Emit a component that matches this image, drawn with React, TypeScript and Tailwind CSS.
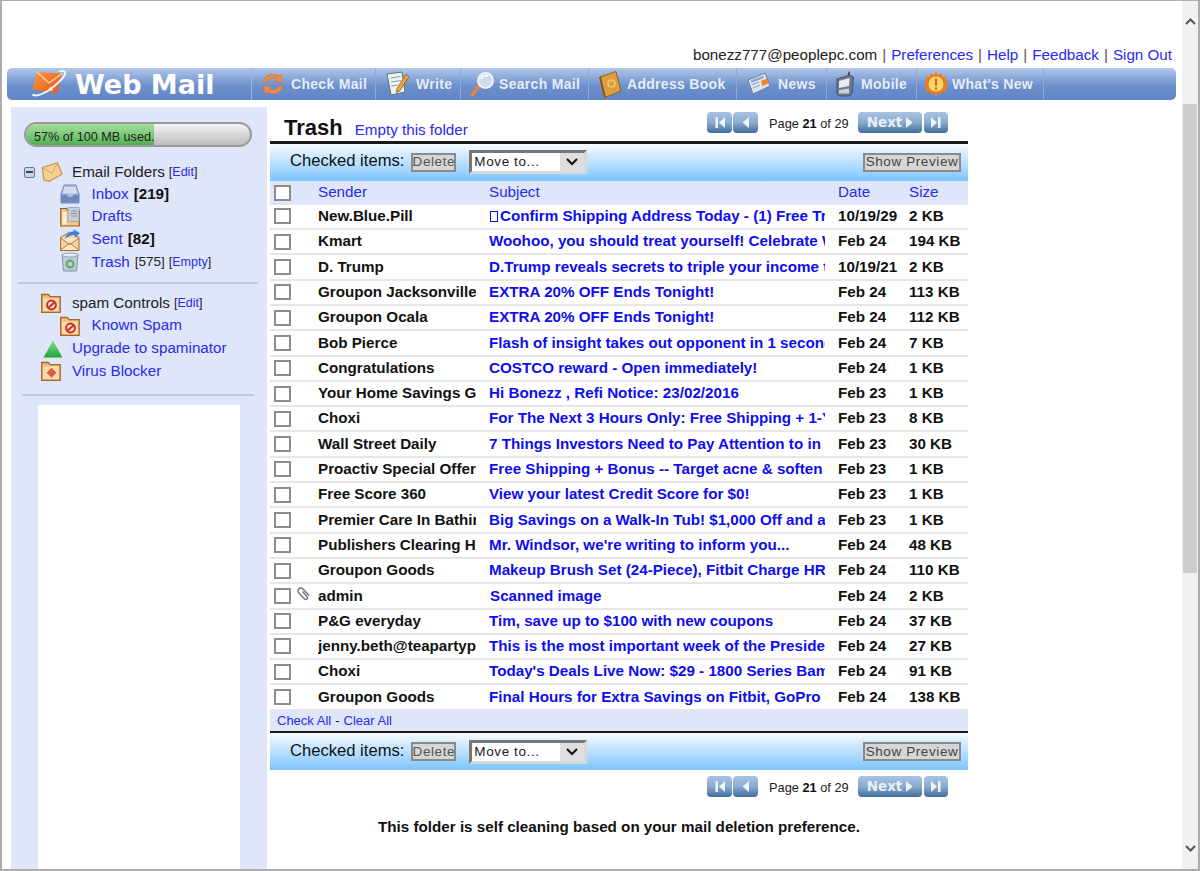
import React from "react";

const rows: [string, string, string, string][] = [
  ["New.Blue.Pill", "Confirm Shipping Address Today - (1) Free Trial Offer", "10/19/29", "2 KB"],
  ["Kmart", "Woohoo, you should treat yourself! Celebrate With Savings", "Feb 24", "194 KB"],
  ["D. Trump", "D.Trump reveals secrets to triple your income today", "10/19/21", "2 KB"],
  ["Groupon Jacksonville", "EXTRA 20% OFF Ends Tonight!", "Feb 24", "113 KB"],
  ["Groupon Ocala", "EXTRA 20% OFF Ends Tonight!", "Feb 24", "112 KB"],
  ["Bob Pierce", "Flash of insight takes out opponent in 1 second flat", "Feb 24", "7 KB"],
  ["Congratulations", "COSTCO reward - Open immediately!", "Feb 24", "1 KB"],
  ["Your Home Savings Guide", "Hi Bonezz , Refi Notice: 23/02/2016", "Feb 23", "1 KB"],
  ["Choxi", "For The Next 3 Hours Only: Free Shipping + 1-Year Deal", "Feb 23", "8 KB"],
  ["Wall Street Daily", "7 Things Investors Need to Pay Attention to in 2016", "Feb 23", "30 KB"],
  ["Proactiv Special Offer", "Free Shipping + Bonus -- Target acne & soften skin", "Feb 23", "1 KB"],
  ["Free Score 360", "View your latest Credit Score for $0!", "Feb 23", "1 KB"],
  ["Premier Care In Bathing", "Big Savings on a Walk-In Tub! $1,000 Off and a Free", "Feb 23", "1 KB"],
  ["Publishers Clearing House", "Mr. Windsor, we're writing to inform you...", "Feb 24", "48 KB"],
  ["Groupon Goods", "Makeup Brush Set (24-Piece), Fitbit Charge HR and more", "Feb 24", "110 KB"],
  ["admin", "Scanned image", "Feb 24", "2 KB"],
  ["P&G everyday", "Tim, save up to $100 with new coupons", "Feb 24", "37 KB"],
  ["jenny.beth@teapartypatriots", "This is the most important week of the Presidential race", "Feb 24", "27 KB"],
  ["Choxi", "Today's Deals Live Now: $29 - 1800 Series Bamboo Sheets", "Feb 24", "91 KB"],
  ["Groupon Goods", "Final Hours for Extra Savings on Fitbit, GoPro and more", "Feb 24", "138 KB"],
];

const Check = () => (
  <span className="block h-[16px] w-[17px] shrink-0 border-2 border-[#8c8c8c] bg-white" />
);

const FolderIcon = ({ mark }: { mark: "spam" | "virus" }) => (
  <svg width="20" height="20" viewBox="0 0 20 20">
    <path d="M0.7 1.500h6.500l2 2.200h10v15.600H0.700z" fill="#f0bd7c" stroke="#a8642a" strokeWidth="1.300" />
    <rect x="2.200" y="5.500" width="15.600" height="12.500" fill="#fbdcb0" />
    {mark === "spam" ? (
      <g>
        <circle cx="10.500" cy="12" r="4.400" fill="#f2e4d8" stroke="#cf2a1e" strokeWidth="2" />
        <path d="M7.600 14.400l5.800-4.800" stroke="#cf2a1e" strokeWidth="2" />
      </g>
    ) : (
      <path d="M10.500 6.800l5 5-5 5-5-5z" fill="#d9603a" />
    )}
  </svg>
);

const OpenFolder = () => (
  <svg width="22" height="20" viewBox="0 0 22 20">
    <path d="M1.200 5.500L16.500 0.800l4.600 11.500-13 7-5.200-1.300z" fill="#f6cf92" stroke="#c9944e" strokeWidth="1.200" />
    <path d="M1.500 6l9.800 5.200 5.200-10" fill="none" stroke="#d6a564" strokeWidth="1" />
  </svg>
);

const InboxIcon = () => (
  <svg width="20" height="20" viewBox="0 0 20 20">
    <path d="M4 1h12l3 9v9H1v-9z" fill="#aebcdc" stroke="#7489b4" strokeWidth="1" />
    <path d="M4.500 3h11l2 6.500h-15z" fill="#d0dbef" />
    <path d="M1 10.500h5.500l1.500 2.500h4l1.500-2.500H19v8H1z" fill="#6e8abd" />
  </svg>
);

const DraftsIcon = () => (
  <svg width="20" height="20" viewBox="0 0 20 20">
    <path d="M0.700 1.500h6l1 2h11.600v15.500H0.700z" fill="#f3c584" stroke="#9a5f28" strokeWidth="1.200" />
    <rect x="2.500" y="5" width="4" height="12.500" fill="#fff0d8" />
    <rect x="8" y="0.500" width="11" height="14" fill="#c8ced9" stroke="#9aa2b0" strokeWidth="0.800" />
    <path d="M11 4h6M11 6.500h6M11 9h6" stroke="#8b93a3" strokeWidth="1" />
  </svg>
);

const SentIcon = () => (
  <svg width="20" height="22" viewBox="0 0 20 22">
    <path d="M0.600 8.500L9.500 3l9.500 5.500v13H0.600z" fill="#f5d4a2" stroke="#a86d30" strokeWidth="1" />
    <path d="M0.600 21l9-7 9.400 7M0.600 9l9 6.500L19 9" fill="#fbe6c6" stroke="#b67b3b" strokeWidth="1" />
    <path d="M5 10c1-5 5-7.500 9-7.500L13.200 0 20 4.200l-5 4.400-.4-2.600C11 6 8 7.500 5 10z" fill="#3f7fdc" />
  </svg>
);

const TrashIcon = () => (
  <svg width="18" height="20" viewBox="0 0 18 20">
    <path d="M1 2.500h16l-1.500 16.500h-13z" fill="#bcc9de" stroke="#8393ad" strokeWidth="1" />
    <ellipse cx="9" cy="3" rx="8" ry="2" fill="#e4e9f2" stroke="#8393ad" strokeWidth="0.800" />
    <circle cx="9" cy="12" r="3.500" fill="none" stroke="#58a83f" strokeWidth="1.800" />
  </svg>
);

const Triangle = () => (
  <svg width="20" height="18" viewBox="0 0 20 18">
    <defs>
      <linearGradient id="triangleFill" x1="0" y1="0" x2="0" y2="1">
        <stop offset="0" stopColor="#7fe08a" />
        <stop offset="1" stopColor="#22a33a" />
      </linearGradient>
    </defs>
    <path d="M10 0.500l9.500 17H0.500z" fill="url(#triangleFill)" />
  </svg>
);

const LogoIcon = () => (
  <svg width="36" height="30" viewBox="0 0 36 30">
    <defs>
      <linearGradient id="logoEnvelope" x1="0" y1="0" x2="1" y2="1">
        <stop offset="0" stopColor="#fb9a3c" />
        <stop offset="1" stopColor="#e4541a" />
      </linearGradient>
    </defs>
    <path d="M6 3l25 1.500-5 20-24.500-4z" fill="url(#logoEnvelope)" />
    <path d="M6 3l12 11 13-9.500" fill="none" stroke="#ffd9b0" strokeWidth="1.200" />
    <path d="M1.500 25.500c3.500 3 14-1.500 22-8.500S36 5.500 33.500 2.500c-1.500-1-3.500-.7-5.500 0" fill="none" stroke="#f3f6fc" strokeWidth="1.800" />
    <circle cx="20" cy="20" r="1.800" fill="#fff" />
  </svg>
);

const SyncIcon = () => (
  <svg width="24" height="24" viewBox="0 0 24 24">
    <path d="M2 10C3.500 3.500 11 0 18 4l2-2 1.500 8-8-.5 2.500-2.500C12 4.800 7.500 6 6 10z" fill="#ee8a4a" stroke="#d86c2a" strokeWidth="0.600" />
    <path d="M22 14c-1.500 6.500-9 10-16 6l-2 2-1.500-8 8 .5L8 17c4 2.200 8.500 1 10-3z" fill="#ee8a4a" stroke="#d86c2a" strokeWidth="0.600" />
  </svg>
);

const WriteIcon = () => (
  <svg width="24" height="26" viewBox="0 0 24 26">
    <path d="M1 3l15-2 3 20-14 3z" fill="#eef2f4" stroke="#5f6f76" strokeWidth="1" />
    <path d="M4.500 7l10-1.500M5 11l10-1.500M5.500 15l6-1" stroke="#8f9ba1" strokeWidth="1" />
    <path d="M20 3.500l3 2-9 14-3.500 2 .5-4z" fill="#f0a63a" stroke="#8d5a1e" strokeWidth="0.800" />
  </svg>
);

const SearchIcon = () => (
  <svg width="26" height="26" viewBox="0 0 26 26">
    <path d="M2 24l8-10" stroke="#e68645" strokeWidth="3.600" strokeLinecap="round" />
    <circle cx="15.500" cy="9.500" r="7.500" fill="#cfdcec" stroke="#eff4fa" strokeWidth="2" />
    <path d="M11 8c1-3 4-4 7-3" fill="none" stroke="#fff" strokeWidth="1.500" />
  </svg>
);

const BookIcon = () => (
  <svg width="24" height="27" viewBox="0 0 24 27">
    <path d="M2 6L18 0.500l5 19.500-16 6.500z" fill="#dc9f3c" stroke="#8b5c1a" strokeWidth="1" />
    <path d="M2 6l5 20.500" stroke="#87581a" strokeWidth="2" />
    <circle cx="13.500" cy="12.500" r="3.500" fill="none" stroke="#f3d28f" strokeWidth="1.200" />
  </svg>
);

const NewsIcon = () => (
  <svg width="24" height="24" viewBox="0 0 24 24">
    <path d="M1 8l17-7 5 13-17 8z" fill="#dbe4f0" stroke="#6f7f98" strokeWidth="1" />
    <path d="M3.500 8.500l12.500-5 1 2.500-12.500 5z" fill="#8fa8cf" />
    <path d="M14 9l6-2.500 1.500 5-6 2.500z" fill="#f08a25" />
    <path d="M5 13l7-3M6 16l7-3" stroke="#8d9ab0" strokeWidth="1" />
  </svg>
);

const MobileIcon = () => (
  <svg width="20" height="26" viewBox="0 0 20 26">
    <path d="M12.500 5l1-4.500 1.500.3-.8 4.700" fill="#3c4656" />
    <path d="M2 8l13-4 3.500 2-1.500 17-3 2H4l-2-2z" fill="#6b7a8c" stroke="#39455a" strokeWidth="0.800" />
    <path d="M4 10l10.500-3-.5 8-10 2z" fill="#e8edf3" />
    <path d="M4 19l10-1.500v5H4z" fill="#c9d2dd" />
  </svg>
);

const BurstIcon = () => (
  <svg width="24" height="24" viewBox="0 0 24 24">
    <path d="M12 0l2.200 3.300L17.500 1l.8 3.900 3.900-.8-.8 3.900L24 9.200 21.500 12 24 14.800 21.400 16l.8 3.900-3.900-.8-.8 3.900-3.300-2.300L12 24l-2.200-3.300L6.500 23l-.8-3.900-3.900.8.8-3.900L0 14.800 2.500 12 0 9.200 2.600 8l-.8-3.900 3.900.8.800-3.900 3.300 2.300z" fill="#ef7d1a" />
    <circle cx="12" cy="12" r="7.500" fill="#fbd76b" />
    <path d="M12 6.500v7" stroke="#d9651a" strokeWidth="2.200" />
    <circle cx="12" cy="16.500" r="1.300" fill="#d9651a" />
  </svg>
);

const navItems: { label: string; width: string; icon: React.ReactNode; gap: string }[] = [
  { label: "Check Mail", width: "w-[124px]", icon: <SyncIcon />, gap: "pl-[9px] gap-[6px]" },
  { label: "Write", width: "w-[85px]", icon: <WriteIcon />, gap: "pl-[10px] gap-[6px]" },
  { label: "Search Mail", width: "w-[128px]", icon: <SearchIcon />, gap: "pl-[9px] gap-[3px]" },
  { label: "Address Book", width: "w-[148px]", icon: <BookIcon />, gap: "pl-[9px] gap-[5px]" },
  { label: "News", width: "w-[90px]", icon: <NewsIcon />, gap: "pl-[10px] gap-[7px]" },
  { label: "Mobile", width: "w-[90px]", icon: <MobileIcon />, gap: "pl-[8px] gap-[6px]" },
  { label: "What's New", width: "w-[127px]", icon: <BurstIcon />, gap: "pl-[7px] gap-[4px]" },
];

const linkCls = "text-[#2a2af0]";

const Toolbar = () => (
  <div className="flex h-[37px] items-center bg-gradient-to-b from-[#f6fbff] to-[#7cc4fd] pl-[20px] pr-[7px]">
    <span className="pb-[1px] text-[16.600px] text-[#111]">Checked items:</span>
    <span className="ml-[7px] flex h-[19px] w-[45px] items-center justify-center border-2 border-[#8a8a8a] bg-[#d6d6d6] text-[13.500px] tracking-[0.6px] text-[#555]">
      Delete
    </span>
    <span className="ml-[13px] flex h-[24px] w-[118px] border-[3px] border-b-[#d8d8d8] border-l-[#777] border-r-[#d8d8d8] border-t-[#777] bg-white">
      <span className="flex-1 pl-[2px] text-[13.500px] leading-[18px] tracking-[0.6px] text-[#222]">Move to...</span>
      <span className="flex w-[24px] items-center justify-center bg-[#dedede]">
        <svg width="12" height="8" viewBox="0 0 12 8">
          <path d="M1 1l5 5 5-5" fill="none" stroke="#111" strokeWidth="2" />
        </svg>
      </span>
    </span>
    <span className="ml-auto flex h-[19px] w-[98px] items-center justify-center border-2 border-[#8a8a8a] bg-[#d6d6d6] text-[13.500px] tracking-[0.6px] text-[#444]">
      Show Preview
    </span>
  </div>
);

const pagerBtn = "flex items-center justify-center rounded-[4px] bg-gradient-to-b from-[#a9c3e2] via-[#8cabd0] to-[#3f6d9f]";

const Pager = () => (
  <div className="flex h-[21px] items-center">
    <span className={`h-[21px] w-[25px] ${pagerBtn}`}>
      <svg width="12" height="13" viewBox="0 0 12 13"><path d="M1.500 1v11h2.500V1zM11 1v11L5 6.500z" fill="#eef4fb" /></svg>
    </span>
    <span className={`ml-[1px] h-[21px] w-[25px] ${pagerBtn}`}>
      <svg width="10" height="13" viewBox="0 0 10 13"><path d="M8 1v11L1.500 6.500z" fill="#eef4fb" /></svg>
    </span>
    <span className="ml-[11px] w-[79px] whitespace-nowrap pt-[3px] text-[12.800px] text-[#222]">
      Page <b className="text-[#111]">21</b> of 29
    </span>
    <span className={`ml-[10px] h-[21px] w-[64px] gap-[3px] ${pagerBtn}`}>
      <span className="font-['DejaVu_Sans',sans-serif] text-[13.500px] font-bold text-[#e8eff8]">Next</span>
      <svg width="8" height="13" viewBox="0 0 8 13"><path d="M1 1v11l6.500-5.500z" fill="#eef4fb" /></svg>
    </span>
    <span className={`ml-[2px] h-[21px] w-[24px] ${pagerBtn}`}>
      <svg width="12" height="13" viewBox="0 0 12 13"><path d="M1 1v11l6-5.500zM8 1v11h2.500V1z" fill="#eef4fb" /></svg>
    </span>
  </div>
);

export default function App() {
  return (
    <div className="box-border flex h-[871px] w-[1200px] overflow-hidden border-b-2 border-l-2 border-r-2 border-t border-[#adadad] bg-white font-['Liberation_Sans',Arial,sans-serif]">
      <div className="flex w-[1180px] shrink-0 flex-col">
        <div className="mt-[44px] flex h-[20px] items-center justify-end whitespace-nowrap pr-[10px] text-[15.200px] text-[#222]">
          bonezz777@peoplepc.com
          <span className="mx-[5px] text-[#555]">|</span>
          <span className={linkCls}>Preferences</span>
          <span className="mx-[5px] text-[#555]">|</span>
          <span className={linkCls}>Help</span>
          <span className="mx-[5px] text-[#555]">|</span>
          <span className={linkCls}>Feedback</span>
          <span className="mx-[5px] text-[#555]">|</span>
          <span className={linkCls}>Sign Out</span>
        </div>

        <div className="ml-[5px] mt-[3px] flex h-[32px] w-[1169px] shrink-0 rounded-[5px] bg-gradient-to-b from-[#b3c8e8] via-[#6c90cc] via-55% to-[#6286c6]">
          <div className="flex w-[245px] items-center border-r border-[#9db5dc] pl-[24px]">
            <LogoIcon />
            <span className="ml-[8px] font-['DejaVu_Sans',sans-serif] text-[27px] font-bold leading-none text-white">Web Mail</span>
          </div>
          {navItems.map((n) => (
            <div key={n.label} className={`flex items-center border-r border-[#8fa9d6] ${n.width} ${n.gap}`}>
              <span className="flex shrink-0 items-center justify-center">{n.icon}</span>
              <span className="whitespace-nowrap text-[14px] font-bold tracking-[0.3px] text-[#e6edf8]">{n.label}</span>
            </div>
          ))}
        </div>

        <div className="ml-[9px] mt-[7px] flex min-h-0 flex-1 gap-[3px]">
          <aside className="flex w-[256px] shrink-0 flex-col bg-[#dfe6f9]">
            <div className="relative ml-[13px] mt-[15px] h-[25px] w-[228px] overflow-hidden rounded-full border-2 border-[#9a9a9a] bg-gradient-to-b from-[#f4f4f4] via-[#d8d8d8] to-[#bcbcbc]">
              <div className="h-full w-[57%] bg-gradient-to-b from-[#a6dc9d] via-[#7ecb78] to-[#53ae55]" />
              <span className="absolute left-[8px] top-[3.500px] whitespace-nowrap text-[12.600px] text-[#222]">57% of 100 MB used.</span>
            </div>

            <div className="mt-[14px] flex flex-col text-[15.200px] text-[#222]">
              <div className="flex h-[22px] items-center pl-[13px]">
                <span className="flex h-[11px] w-[11px] items-center justify-center rounded-[2px] border border-[#6a7a95] bg-[#c8d4e8]">
                  <span className="h-[2px] w-[7px] bg-[#33435e]" />
                </span>
                <span className="ml-[6px] w-[23px]"><OpenFolder /></span>
                <span className="ml-[8px]">Email Folders</span>
                <span className="ml-[4px] text-[12.500px]">[<span className={linkCls}>Edit</span>]</span>
              </div>
              <div className="flex h-[22px] items-center pl-[49px]">
                <span className="w-[20px]"><InboxIcon /></span>
                <span className={`ml-[11.500px] ${linkCls}`}>Inbox</span>
                <b className="ml-[5px] text-[#111]">[219]</b>
              </div>
              <div className="flex h-[23px] items-center pl-[49px]">
                <span className="w-[20px]"><DraftsIcon /></span>
                <span className={`ml-[11.500px] ${linkCls}`}>Drafts</span>
              </div>
              <div className="flex h-[23px] items-center pl-[49px]">
                <span className="w-[20px]"><SentIcon /></span>
                <span className={`ml-[11.500px] ${linkCls}`}>Sent</span>
                <b className="ml-[5px] text-[#111]">[82]</b>
              </div>
              <div className="flex h-[22px] items-center pl-[49px]">
                <span className="w-[20px] pl-[1px]"><TrashIcon /></span>
                <span className={`ml-[11.500px] ${linkCls}`}>Trash</span>
                <span className="ml-[5px] text-[13.500px]">[575]</span>
                <span className="ml-[4px] text-[12.500px]">[<span className={linkCls}>Empty</span>]</span>
              </div>
            </div>

            <div className="ml-[7px] mt-[9px] h-[2px] w-[240px] bg-[#c4c8d0]" />

            <div className="mt-[8px] flex flex-col text-[15.200px] text-[#222]">
              <div className="flex h-[22px] items-center pl-[30px]">
                <span className="w-[20px]"><FolderIcon mark="spam" /></span>
                <span className="ml-[11px]">spam Controls</span>
                <span className="ml-[4px] text-[12.500px]">[<span className={linkCls}>Edit</span>]</span>
              </div>
              <div className="flex h-[23px] items-center pl-[49px]">
                <span className="w-[20px]"><FolderIcon mark="spam" /></span>
                <span className={`ml-[11.500px] ${linkCls}`}>Known Spam</span>
              </div>
              <div className="flex h-[23px] items-center pl-[32px]">
                <span className="w-[20px]"><Triangle /></span>
                <span className={`ml-[9px] ${linkCls}`}>Upgrade to spaminator</span>
              </div>
              <div className="flex h-[22px] items-center pl-[30px]">
                <span className="w-[20px]"><FolderIcon mark="virus" /></span>
                <span className={`ml-[11px] ${linkCls}`}>Virus Blocker</span>
              </div>
            </div>

            <div className="ml-[11px] mt-[12px] h-[2px] w-[232px] bg-[#c4c8d0]" />

            <div className="ml-[27px] mt-[9px] w-[202px] flex-1 bg-white" />
          </aside>

          <main className="flex w-[698px] shrink-0 flex-col">
            <div className="flex h-[34px] items-start">
              <div className="flex w-[437px] items-baseline whitespace-nowrap pl-[14px] pt-[10px]">
                <span className="text-[22px] font-bold leading-none text-[#111]">Trash</span>
                <span className={`ml-[12px] text-[15.200px] leading-none ${linkCls}`}>Empty this folder</span>
              </div>
              <div className="mt-[5px]"><Pager /></div>
            </div>
            <div className="h-[2.500px] bg-[#1a1a1a]" />
            <Toolbar />
            <div className="flex h-[24.300px] items-center bg-[#dfe6f9] text-[15.200px]">
              <span className="ml-[4px] flex w-[44px]"><Check /></span>
              <span className={`w-[171px] ${linkCls}`}>Sender</span>
              <span className={`w-[349px] ${linkCls}`}>Subject</span>
              <span className={`w-[71px] ${linkCls}`}>Date</span>
              <span className={linkCls}>Size</span>
            </div>
            <div className="flex flex-col">
              {rows.map((r, i) => (
                <div key={i} className="relative box-border flex h-[25.300px] items-center border-b-2 border-[#e6e6e6] text-[15.200px] font-bold">
                  <span className="ml-[4px] flex w-[44px]"><Check /></span>
                  {r[0] === "admin" && (
                    <svg className="absolute left-[26px] top-[2px]" width="15" height="15" viewBox="0 0 15 15">
                      <path d="M13 9.500L7.500 3.500C6 2 4 1.500 2.800 2.700 1.500 4 2 6 3.500 7.500L8 12.500c1 1 2.300 1.200 3 .5s.5-2-.5-3L6.500 5.500" fill="none" stroke="#777" strokeWidth="1.500" />
                    </svg>
                  )}
                  <span className="w-[158px] overflow-hidden whitespace-nowrap text-[#111]">{r[0]}</span>
                  <span className="w-[13px]" />
                  <span className="w-[336px] overflow-hidden whitespace-nowrap text-[#0d0df0]">
                    {i === 0 && <span className="ml-[1px] mr-[2px] inline-block h-[11px] w-[8px] border border-[#0d0df0] align-[-1px]" />}
                    {r[0] === "admin" && <span className="inline-block w-[1px]" />}
                    {r[1]}
                  </span>
                  <span className="w-[13px]" />
                  <span className="w-[71px] whitespace-nowrap text-[#111]">{r[2]}</span>
                  <span className="whitespace-nowrap text-[#111]">{r[3]}</span>
                </div>
              ))}
            </div>
            <div className="flex h-[20px] items-center bg-[#dfe6f9] pl-[7px] text-[13px] text-[#222]">
              <span className={linkCls}>Check All</span>
              <span className="mx-[4px]">-</span>
              <span className={linkCls}>Clear All</span>
            </div>
            <div className="h-[2.500px] bg-[#1a1a1a]" />
            <Toolbar />
            <div className="mt-[5.500px] pl-[437px]"><Pager /></div>
            <p className="mt-[19.500px] text-center text-[15.200px] font-bold text-[#111]">
              This folder is self cleaning based on your mail deletion preference.
            </p>
          </main>
        </div>
      </div>

      <div className="flex w-[16px] shrink-0 flex-col items-center bg-[#f1f1f1]">
        <div className="flex h-[40px] shrink-0 items-center justify-center">
          <svg width="11" height="7" viewBox="0 0 11 7"><path d="M1 6l4.500-4.500L10 6" fill="none" stroke="#555" strokeWidth="2" /></svg>
        </div>
        <div className="mt-[63px] h-[469px] w-[14px] shrink-0 bg-[#cdcdcd]" />
        <div className="mt-auto flex h-[42px] shrink-0 items-center justify-center">
          <svg width="11" height="7" viewBox="0 0 11 7"><path d="M1 1l4.500 4.500L10 1" fill="none" stroke="#555" strokeWidth="2" /></svg>
        </div>
      </div>
    </div>
  );
}
